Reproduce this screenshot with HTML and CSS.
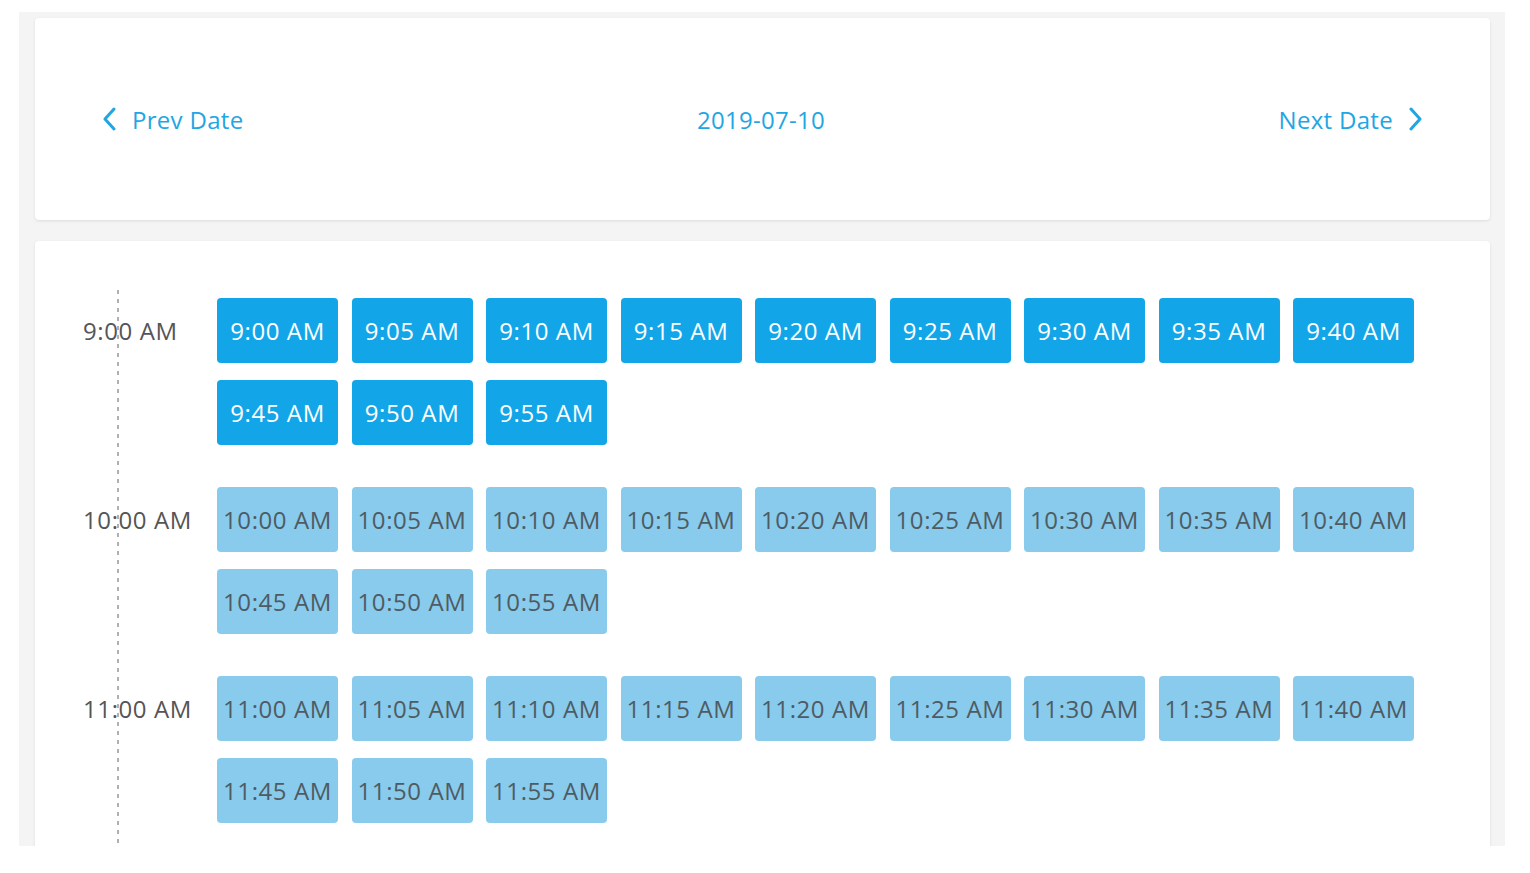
FILE: index.html
```html
<!DOCTYPE html>
<html lang="en">
<head>
    <meta charset="UTF-8">
    <meta name="viewport" content="width=device-width, initial-scale=1.0">
    <title>Pick a time</title>
    <link rel="stylesheet" href="styles.css">
</head>
<body>
    <div class="frame">
        <div class="card date-bar">
            <a class="date-nav" href="#">
                <svg width="14" height="24" viewBox="0 0 14 24"><path d="M12 2 L3 12 L12 22" fill="none" stroke="currentColor" stroke-width="3" stroke-linecap="round" stroke-linejoin="round"/></svg>
                <span>Prev Date</span>
            </a>
            <div class="current-date">2019-07-10</div>
            <a class="date-nav" href="#">
                <span>Next Date</span>
                <svg width="14" height="24" viewBox="0 0 14 24"><path d="M2 2 L11 12 L2 22" fill="none" stroke="currentColor" stroke-width="3" stroke-linecap="round" stroke-linejoin="round"/></svg>
            </a>
        </div>

        <div class="card schedule">
            <div class="timeline"></div>

            <div class="hour">
                <div class="hour-label">9:00 AM</div>
                <div class="slots">
                    <button class="slot open">9:00 AM</button>
                    <button class="slot open">9:05 AM</button>
                    <button class="slot open">9:10 AM</button>
                    <button class="slot open">9:15 AM</button>
                    <button class="slot open">9:20 AM</button>
                    <button class="slot open">9:25 AM</button>
                    <button class="slot open">9:30 AM</button>
                    <button class="slot open">9:35 AM</button>
                    <button class="slot open">9:40 AM</button>
                    <button class="slot open">9:45 AM</button>
                    <button class="slot open">9:50 AM</button>
                    <button class="slot open">9:55 AM</button>
                </div>
            </div>

            <div class="hour">
                <div class="hour-label">10:00 AM</div>
                <div class="slots">
                    <button class="slot">10:00 AM</button>
                    <button class="slot">10:05 AM</button>
                    <button class="slot">10:10 AM</button>
                    <button class="slot">10:15 AM</button>
                    <button class="slot">10:20 AM</button>
                    <button class="slot">10:25 AM</button>
                    <button class="slot">10:30 AM</button>
                    <button class="slot">10:35 AM</button>
                    <button class="slot">10:40 AM</button>
                    <button class="slot">10:45 AM</button>
                    <button class="slot">10:50 AM</button>
                    <button class="slot">10:55 AM</button>
                </div>
            </div>

            <div class="hour">
                <div class="hour-label">11:00 AM</div>
                <div class="slots">
                    <button class="slot">11:00 AM</button>
                    <button class="slot">11:05 AM</button>
                    <button class="slot">11:10 AM</button>
                    <button class="slot">11:15 AM</button>
                    <button class="slot">11:20 AM</button>
                    <button class="slot">11:25 AM</button>
                    <button class="slot">11:30 AM</button>
                    <button class="slot">11:35 AM</button>
                    <button class="slot">11:40 AM</button>
                    <button class="slot">11:45 AM</button>
                    <button class="slot">11:50 AM</button>
                    <button class="slot">11:55 AM</button>
                </div>
            </div>
        </div>
    </div>
</body>
</html>
```

FILE: styles.css
```css
body {
    margin: 0;
    padding: 0;
    background: #fff;
    font-family: "Open Sans", "Liberation Sans", sans-serif;
}

.frame {
    margin: 12px 25px 0 19px;
    height: 834px;
    padding: 6px 15px 0 16px;
    box-sizing: border-box;
    background: #f4f4f4;
    overflow: hidden;
}

.card {
    background: #fff;
    border-radius: 4px;
    box-shadow: 0 1px 3px rgba(0, 0, 0, 0.1);
}

/* date switcher */
.date-bar {
    height: 202px;
    display: flex;
    align-items: center;
    justify-content: space-between;
    padding: 0 67px;
    box-sizing: border-box;
    color: #1fa6e3;
    font-size: 24px;
    letter-spacing: 0.3px;
}

.date-nav {
    display: flex;
    align-items: center;
    gap: 16px;
    color: inherit;
    text-decoration: none;
}

.date-nav svg {
    display: block;
}

/* time slots */
.schedule {
    position: relative;
    margin-top: 21px;
    min-height: 700px;
    padding: 57px 0 0 48px;
}

.timeline {
    position: absolute;
    left: 82px;
    top: 49px;
    bottom: 0;
    width: 2px;
    background: linear-gradient(#b0b0b0 40%, transparent 40%) 0 0 / 2px 9px repeat-y;
}

.hour {
    display: flex;
    margin-bottom: 42px;
}

.hour-label {
    width: 134px;
    flex: none;
    height: 65px;
    line-height: 65px;
    font-size: 24px;
    letter-spacing: 0.6px;
    color: #555;
    white-space: nowrap;
}

.slots {
    display: grid;
    grid-template-columns: repeat(9, 121px);
    column-gap: 13.5px;
    row-gap: 17px;
}

.slot {
    height: 65px;
    padding: 0;
    border: none;
    border-radius: 4px;
    background: #88cbec;
    color: #4f5b63;
    font-family: inherit;
    font-size: 24px;
    letter-spacing: 0.6px;
    white-space: nowrap;
    cursor: pointer;
}

.slot.open {
    background: #12a6e9;
    color: #fff;
}
```
